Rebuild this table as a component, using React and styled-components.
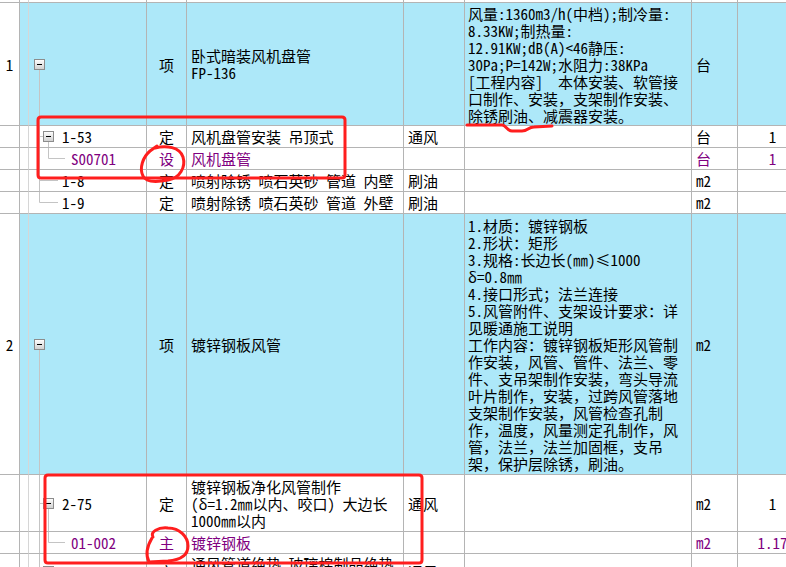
import React from 'react'
import styled, { createGlobalStyle } from 'styled-components'

const BLUE = '#ade8f9'
const LINE = '#b4b4b4'
const TREE = '#c4c4c4'
const PURPLE = '#800080'

const GlobalStyle = createGlobalStyle`
  html, body { margin: 0; padding: 0; background: #fff; }
`

const Page = styled.div`
  position: relative;
  width: 786px;
  height: 567px;
  overflow: hidden;
  background: #fff;
  font-family: "Noto Sans Mono CJK SC", "Noto Sans CJK SC", sans-serif;
  font-size: 15px;
  line-height: 17px;
  color: #000;
`

const Row = styled.div`
  display: grid;
  grid-template-columns: 20px 9px 118px 40px 217px 61px 227px 46px 70px;
  height: ${p => p.$h}px;
  background: ${p => (p.$blue ? BLUE : '#fff')};
  color: ${p => (p.$purple ? PURPLE : '#000')};
`

const Cell = styled.div`
  box-sizing: border-box;
  display: flex;
  align-items: center;
  justify-content: ${p => p.$align || 'flex-start'};
  padding: 0 ${p => (p.$pad != null ? p.$pad : 4)}px;
  border-right: 1px solid ${p => p.$soft ? '#d6d6d6' : LINE};
  border-bottom: 1px solid ${LINE};
  overflow: hidden;
  white-space: nowrap;
`

const NumCell = styled(Cell)`
  background: #fff;
  color: #000;
  justify-content: center;
  padding: 0;
`

const TreeCell = styled(Cell)`
  position: relative;
  padding: 0 0 0 ${p => p.$indent}px;
`

const Connectors = styled.svg`
  position: absolute;
  left: 0;
  top: 0;
`

const Lines = styled.div`
  display: flex;
  flex-direction: column;
`

const Marks = styled.svg`
  position: absolute;
  left: 0;
  top: 0;
  pointer-events: none;
  fill: none;
  stroke: #ff1e1e;
  stroke-width: 3;
  stroke-linecap: round;
  stroke-linejoin: round;
`

function ExpandBox({ x, y }) {
  return (
    <g>
      <defs>
        <linearGradient id="boxfill" x1="0" y1="0" x2="0" y2="1">
          <stop offset="0" stopColor="#ffffff" />
          <stop offset="1" stopColor="#cfcfcf" />
        </linearGradient>
      </defs>
      <rect x={x + 0.5} y={y + 0.5} width="10" height="10" fill="url(#boxfill)" stroke="#8c8c8c" />
      <line x1={x + 3} y1={y + 5.5} x2={x + 8} y2={y + 5.5} stroke="#000" />
    </g>
  )
}

// tree connectors drawn inside the code column (x relative to the column)
function Tree({ h, t }) {
  const ch = h - 1
  const c = Math.floor(ch / 2) + 0.5
  const trunk = 10.5
  const mid = 19.5
  return (
    <Connectors width="118" height={ch}>
      <g stroke={TREE} strokeWidth="1">
        {t.trunk === 'full' && <line x1={trunk} y1="0" x2={trunk} y2={ch} />}
        {t.trunk === 'up' && <line x1={trunk} y1="0" x2={trunk} y2={c} />}
        {t.box === 1 && <line x1={trunk} y1={c} x2={trunk} y2={ch} />}
        {t.box === 2 && <line x1={trunk} y1={c} x2="14" y2={c} />}
        {t.branchDown && <line x1={mid} y1={c} x2={mid} y2={ch} />}
        {t.leaf2 && <line x1={trunk} y1={c} x2="29" y2={c} />}
        {t.leaf3 && <line x1={mid} y1="0" x2={mid} y2={c} />}
        {t.leaf3 && <line x1={mid} y1={c} x2="36" y2={c} />}
      </g>
      {t.box === 1 && <ExpandBox x={5} y={Math.floor(c) - 5} />}
      {t.box === 2 && <ExpandBox x={14} y={Math.floor(c) - 5} />}
    </Connectors>
  )
}

const rows = [
  { h: 3 },
  {
    h: 123, blue: true, num: '1', tree: { box: 1 }, type: '项',
    name: ['卧式暗装风机盘管', 'FP-136'],
    desc: [
      '风量:1360m3/h(中档);制冷量:',
      '8.33KW;制热量:',
      '12.91KW;dB(A)<46静压:',
      '30Pa;P=142W;水阻力:38KPa',
      '[工程内容]　本体安装、软管接',
      '口制作、安装，支架制作安装、',
      '除锈刷油、减震器安装。',
    ],
    unit: '台',
  },
  { h: 22, tree: { trunk: 'full', box: 2, branchDown: true }, code: '1-53', level: 2, type: '定', name: ['风机盘管安装 吊顶式'], major: '通风', unit: '台', qty: '1' },
  { h: 22, purple: true, tree: { trunk: 'full', leaf3: true }, code: 'S00701', level: 3, type: '设', name: ['风机盘管'], unit: '台', qty: '1' },
  { h: 22, tree: { trunk: 'full', leaf2: true }, code: '1-8', level: 2, type: '定', name: ['喷射除锈 喷石英砂 管道 内壁'], major: '刷油', unit: 'm2' },
  { h: 22, tree: { trunk: 'up', leaf2: true }, code: '1-9', level: 2, type: '定', name: ['喷射除锈 喷石英砂 管道 外壁'], major: '刷油', unit: 'm2' },
  {
    h: 261, blue: true, num: '2', tree: { box: 1 }, type: '项',
    name: ['镀锌钢板风管'],
    desc: [
      '1.材质：镀锌钢板',
      '2.形状：矩形',
      '3.规格:长边长(㎜)≤1000',
      'δ=0.8㎜',
      '4.接口形式；法兰连接',
      '5.风管附件、支架设计要求：详',
      '见暖通施工说明',
      '工作内容：镀锌钢板矩形风管制',
      '作安装，风管、管件、法兰、零',
      '件、支吊架制作安装，弯头导流',
      '叶片制作，安装，过跨风管落地',
      '支架制作安装，风管检查孔制',
      '作，温度，风量测定孔制作，风',
      '管，法兰，法兰加固框，支吊',
      '架，保护层除锈，刷油。',
    ],
    unit: 'm2',
  },
  { h: 57, tree: { trunk: 'full', box: 2, branchDown: true }, code: '2-75', level: 2, type: '定', name: ['镀锌钢板净化风管制作', '(δ=1.2㎜以内、咬口) 大边长', '1000㎜以内'], major: '通风', unit: 'm2', qty: '1' },
  { h: 22, purple: true, tree: { trunk: 'full', leaf3: true }, code: '01-002', level: 3, type: '主', name: ['镀锌钢板'], unit: 'm2', qty: '1.17' },
  { h: 36, tree: { trunk: 'full', box: 2 }, code: '2-76', level: 2, type: '定', name: ['通风管道绝热 玻璃棉制品绝热', '厚度50㎜'], major: '通风', unit: 'm3', qty: '1' },
]

function TextLines({ lines }) {
  if (!lines) return null
  return (
    <Lines>
      {lines.map((l, i) => <div key={i}>{l}</div>)}
    </Lines>
  )
}

function BillRow({ r }) {
  const indent = r.level === 3 ? 42 : 33
  return (
    <Row $h={r.h} $blue={r.blue} $purple={r.purple}>
      <NumCell>{r.num}</NumCell>
      <Cell $soft $pad={0} />
      <TreeCell $indent={indent}>
        {r.tree && <Tree h={r.h} t={r.tree} />}
        {r.code}
      </TreeCell>
      <Cell $align="center" $pad={0}>{r.type}</Cell>
      <Cell><TextLines lines={r.name} /></Cell>
      <Cell>{r.major}</Cell>
      <Cell $pad={3}><TextLines lines={r.desc} /></Cell>
      <Cell>{r.unit}</Cell>
      <Cell $align="center" $pad={0}>{r.qty}</Cell>
    </Row>
  )
}

export default function App() {
  return (
    <>
      <GlobalStyle />
      <Page>
        {rows.map((r, i) => <BillRow key={i} r={r} />)}
        <Marks width="786" height="567" viewBox="0 0 786 567">
          <path d="M41 117 H342 Q345 117 345 120 V175 Q345 178 342 178 H41 Q38 178 38 175 V120 Q38 117 41 117 Z" />
          <path d="M155 148 C166 145 180 147 183 157 C186 167 180 178 168 180 C158 182 146 183 143 176 C139 168 143 157 150 151 L157 146" />
          <path d="M467 125 L502 125 C506 125 507 131 512 131 L522 131 C528 131 528 127 534 127 L552 126" />
          <path d="M48 475 H419 Q422 475 422 478 V560 Q422 563 419 563 H48 Q45 563 45 560 V478 Q45 475 48 475 Z" />
          <path d="M153 537 C150 532 158 527 168 528 C180 528 188 537 188 546 C188 556 180 560 168 561 L149 562 C146 556 146 548 152 538" />
        </Marks>
      </Page>
    </>
  )
}
